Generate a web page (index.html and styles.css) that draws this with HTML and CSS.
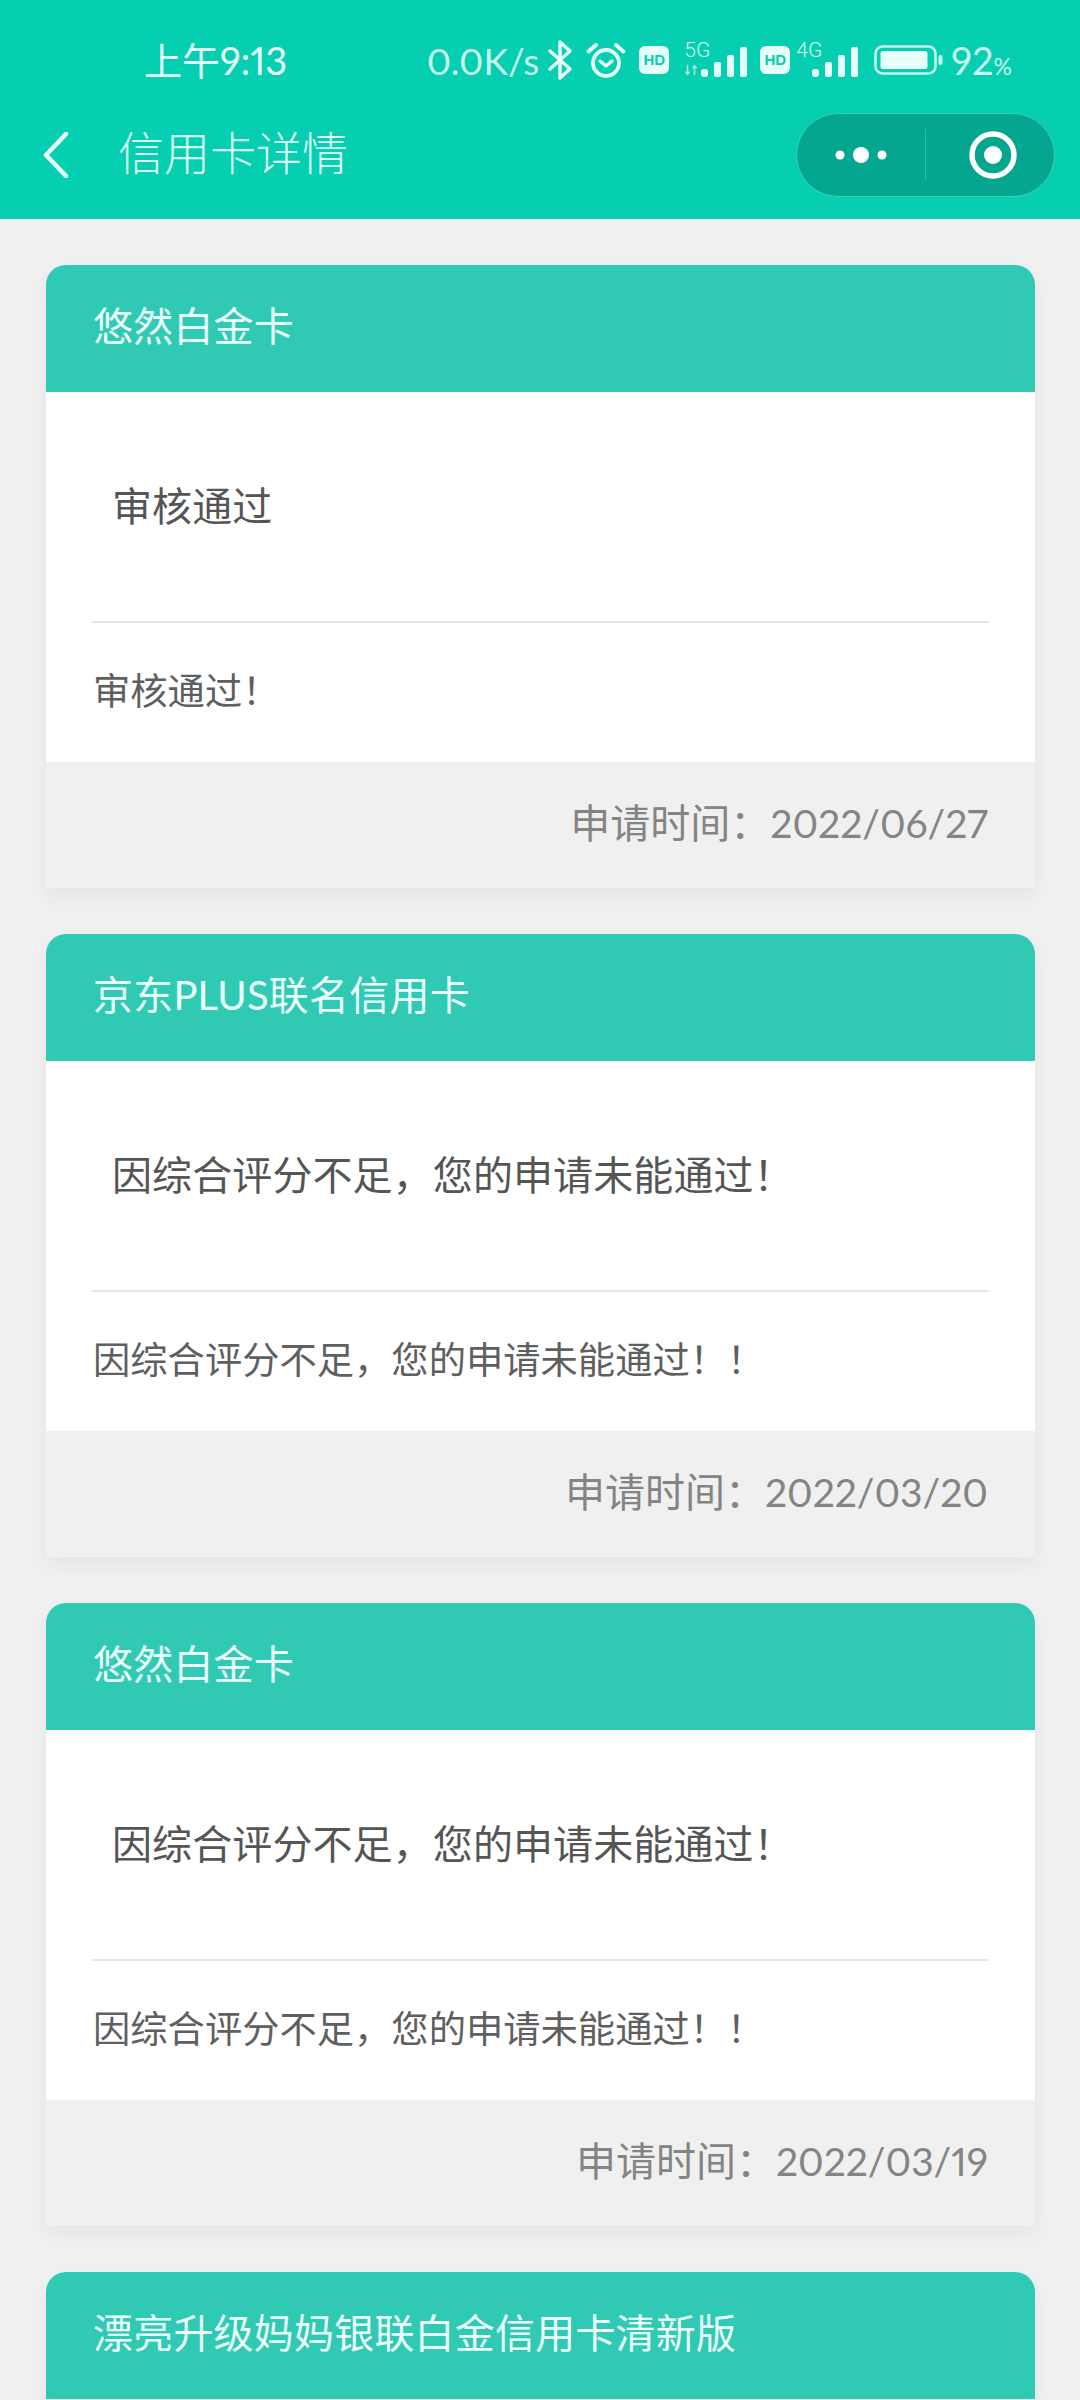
FILE: index.html
```html
<!DOCTYPE html>
<html lang="zh-CN">
<head>
<meta charset="utf-8">
<title>信用卡详情</title>
<link rel="stylesheet" href="styles.css">
</head>
<body>
<header class="top">
  <div class="status">
    <span class="time">上午9:13</span>
    <div class="status-right">
      <span class="speed">0.0K/s</span>
      <svg class="ic-bt" viewBox="0 0 25 40"><path d="M2 11 L22 29 L12 38 L12 2 L22 11 L2 29" fill="none" stroke="#e6fff9" stroke-width="3.400" stroke-linejoin="round" stroke-linecap="round"/></svg>
      <svg class="ic-alarm" viewBox="0 0 40 36"><circle cx="20" cy="21" r="13" fill="none" stroke="#e6fff9" stroke-width="3.800"/><path d="M14 19 L20 24 L26 19" fill="none" stroke="#e6fff9" stroke-width="3.400" stroke-linecap="round" stroke-linejoin="round"/><path d="M2.500 9.500 L10 3 M37.500 9.500 L30 3" stroke="#e6fff9" stroke-width="4" stroke-linecap="round"/></svg>
      <span class="hd hd-a">HD</span>
      <div class="net net-5g">
        <span class="net-label">5G</span>
        <svg class="arrows" viewBox="0 0 16 12"><path d="M4 0 V11 M1.500 8 L4 11 L6.500 8 M12 12 V1 M9.500 4 L12 1 L14.500 4" fill="none" stroke="#9fe9d8" stroke-width="1.800"/></svg>
        <svg class="bars" viewBox="0 0 47 30"><rect x="0" y="22" width="7" height="8" rx="3"/><rect x="13" y="15" width="7" height="15" rx="2"/><rect x="26" y="8" width="7" height="22" rx="2"/><rect x="39" y="0" width="7" height="30" rx="2"/></svg>
      </div>
      <span class="hd hd-b">HD</span>
      <div class="net net-4g">
        <span class="net-label">4G</span>
        <svg class="bars" viewBox="0 0 47 30"><rect x="0" y="22" width="7" height="8" rx="3"/><rect x="13" y="15" width="7" height="15" rx="2"/><rect x="26" y="8" width="7" height="22" rx="2"/><rect x="39" y="0" width="7" height="30" rx="2"/></svg>
      </div>
      <svg class="ic-batt" viewBox="0 0 69 30"><rect x="1.500" y="1.500" width="60" height="27" rx="7" fill="none" stroke="#c8f7ec" stroke-width="2.600"/><rect x="6.500" y="6" width="47" height="18" rx="2.500" fill="#e9fffa"/><rect x="64.500" y="10" width="4" height="10" rx="2" fill="#c8f7ec"/></svg>
      <span class="pct">92<small>%</small></span>
    </div>
  </div>
  <div class="nav">
    <svg class="back" viewBox="0 0 26 46"><path d="M23 2 L3 23 L23 44" fill="none" stroke="#e6fff9" stroke-width="4.500" stroke-linecap="round" stroke-linejoin="round"/></svg>
    <h1 class="nav-title">信用卡详情</h1>
    <div class="capsule">
      <div class="cap-side">
        <svg class="dots" viewBox="0 0 52 18"><circle cx="5" cy="9" r="4.500"/><circle cx="26" cy="9" r="8"/><circle cx="47" cy="9" r="4.500"/></svg>
      </div>
      <span class="cap-line"></span>
      <div class="cap-side">
        <svg class="target" viewBox="0 0 48 48"><circle cx="24" cy="24" r="21" fill="none" stroke="#fff" stroke-width="5.500"/><circle cx="24" cy="24" r="9" fill="#fff"/></svg>
      </div>
    </div>
  </div>
</header>

<main class="list">
  <section class="card">
    <div class="card-head">悠然白金卡</div>
    <div class="card-body">
      <p class="result">审核通过</p>
      <p class="remark">审核通过！</p>
    </div>
    <div class="card-foot">申请时间：<span class="date">2022/06/27</span></div>
  </section>
  <section class="card">
    <div class="card-head">京东PLUS联名信用卡</div>
    <div class="card-body">
      <p class="result">因综合评分不足，您的申请未能通过！</p>
      <p class="remark">因综合评分不足，您的申请未能通过！！</p>
    </div>
    <div class="card-foot">申请时间：<span class="date">2022/03/20</span></div>
  </section>
  <section class="card">
    <div class="card-head">悠然白金卡</div>
    <div class="card-body">
      <p class="result">因综合评分不足，您的申请未能通过！</p>
      <p class="remark">因综合评分不足，您的申请未能通过！！</p>
    </div>
    <div class="card-foot">申请时间：<span class="date">2022/03/19</span></div>
  </section>
  <section class="card">
    <div class="card-head">漂亮升级妈妈银联白金信用卡清新版</div>
  </section>
</main>
</body>
</html>
```
FILE: styles.css
```css
* { box-sizing: border-box; }
html, body { margin: 0; height: 2400px; overflow: hidden; }
body {
  background: #f0f0f0;
  font-family: "Lato", "Noto Sans CJK SC", sans-serif;
  font-weight: 400;
  font-variant-numeric: proportional-nums;
}
p, h1 { margin: 0; font-weight: inherit; }

.top { height: 219px; background: #06ceb0; color: #e6fff9; }
.status {
  height: 92px;
  padding: 30px 68px 0 144px;
  display: flex;
  justify-content: space-between;
  align-items: flex-start;
}
.time { font-size: 38px; line-height: 60px; }
.status-right { display: flex; align-items: center; height: 60px; }
.speed { font-size: 37px; color: #c8f7ec; margin-right: 9px; }
.ic-bt { width: 25px; height: 40px; margin-right: 13px; }
.ic-alarm { width: 40px; height: 36px; margin-right: 13px; }
.hd {
  width: 30px; height: 28px; background: #e6fff9; color: #06ceb0; border-radius: 6px;
  font: 900 15px/28px "Liberation Sans", sans-serif; text-align: center;
}
.hd-a { margin-right: 15px; }
.hd-b { margin-right: 6px; }
.net { position: relative; height: 36px; }
.net-5g { width: 64px; margin-right: 12px; }
.net-4g { width: 63px; margin-right: 15px; }
.net-label { position: absolute; left: 0; top: -2px; font: 300 21px/20px "Roboto", sans-serif; color: #d5fbf1; }
.arrows { position: absolute; left: 0; bottom: 2px; width: 14px; height: 12px; }
.bars { position: absolute; right: 0; bottom: 1px; width: 47px; height: 30px; fill: #e6fff9; }
.ic-batt { width: 69px; height: 30px; margin-right: 8px; }
.pct { font-size: 38px; color: #c8f7ec; white-space: nowrap; }
.pct small { font-size: 23px; }

.nav { height: 127px; display: flex; align-items: center; padding: 0 25px 1px 43px; }
.back { width: 26px; height: 46px; margin-right: 49px; }
.nav-title { font-size: 46px; line-height: 60px; flex: 1; color: #d8fcf3; font-weight: 300; padding-bottom: 4px; }
.capsule {
  width: 259px; height: 84px; border-radius: 42px; background: #04a68f;
  border: 1px solid #33d3ba;
  display: flex; align-items: center;
}
.cap-side { flex: 1; display: flex; justify-content: center; align-items: center; }
.cap-line { width: 1px; height: 52px; background: #2bbfa8; }
.dots { width: 52px; height: 18px; fill: #fff; }
.target { width: 48px; height: 48px; margin-left: 6px; }

.list { padding: 46px 45px 0 46px; display: flex; flex-direction: column; gap: 46px; }
.card {
  border-radius: 20px 20px 0 0; background: #fff;
  box-shadow: 0 8px 20px rgba(0,0,0,.05);
}
.card-head {
  height: 127px; padding: 0 32px 0 47px; background: #30c9b3; color: #eafffa;
  border-radius: 20px 20px 0 0;
  font-size: 40px; line-height: 122px; letter-spacing: .2px;
}
.card-body { height: 370px; padding: 0 46px; background: #fff; color: #555; display: flex; flex-direction: column; }
.result {
  height: 231px; padding: 86px 0 0 20px; font-size: 40px; line-height: 56px; letter-spacing: .1px;
  border-bottom: 2px solid #e5e5e5;
  color: #555;
}
.remark { padding: 0 0 0 1px; font-size: 37.300px; line-height: 50px; margin-top: 43px; color: #5f5f5f; }
.card-foot {
  height: 126px; padding: 0 47px 0 0; background: #f0f0f0; color: #848484;
  font-size: 40px; line-height: 122px; text-align: right;
}
.date { font-size: 39px; }
```
